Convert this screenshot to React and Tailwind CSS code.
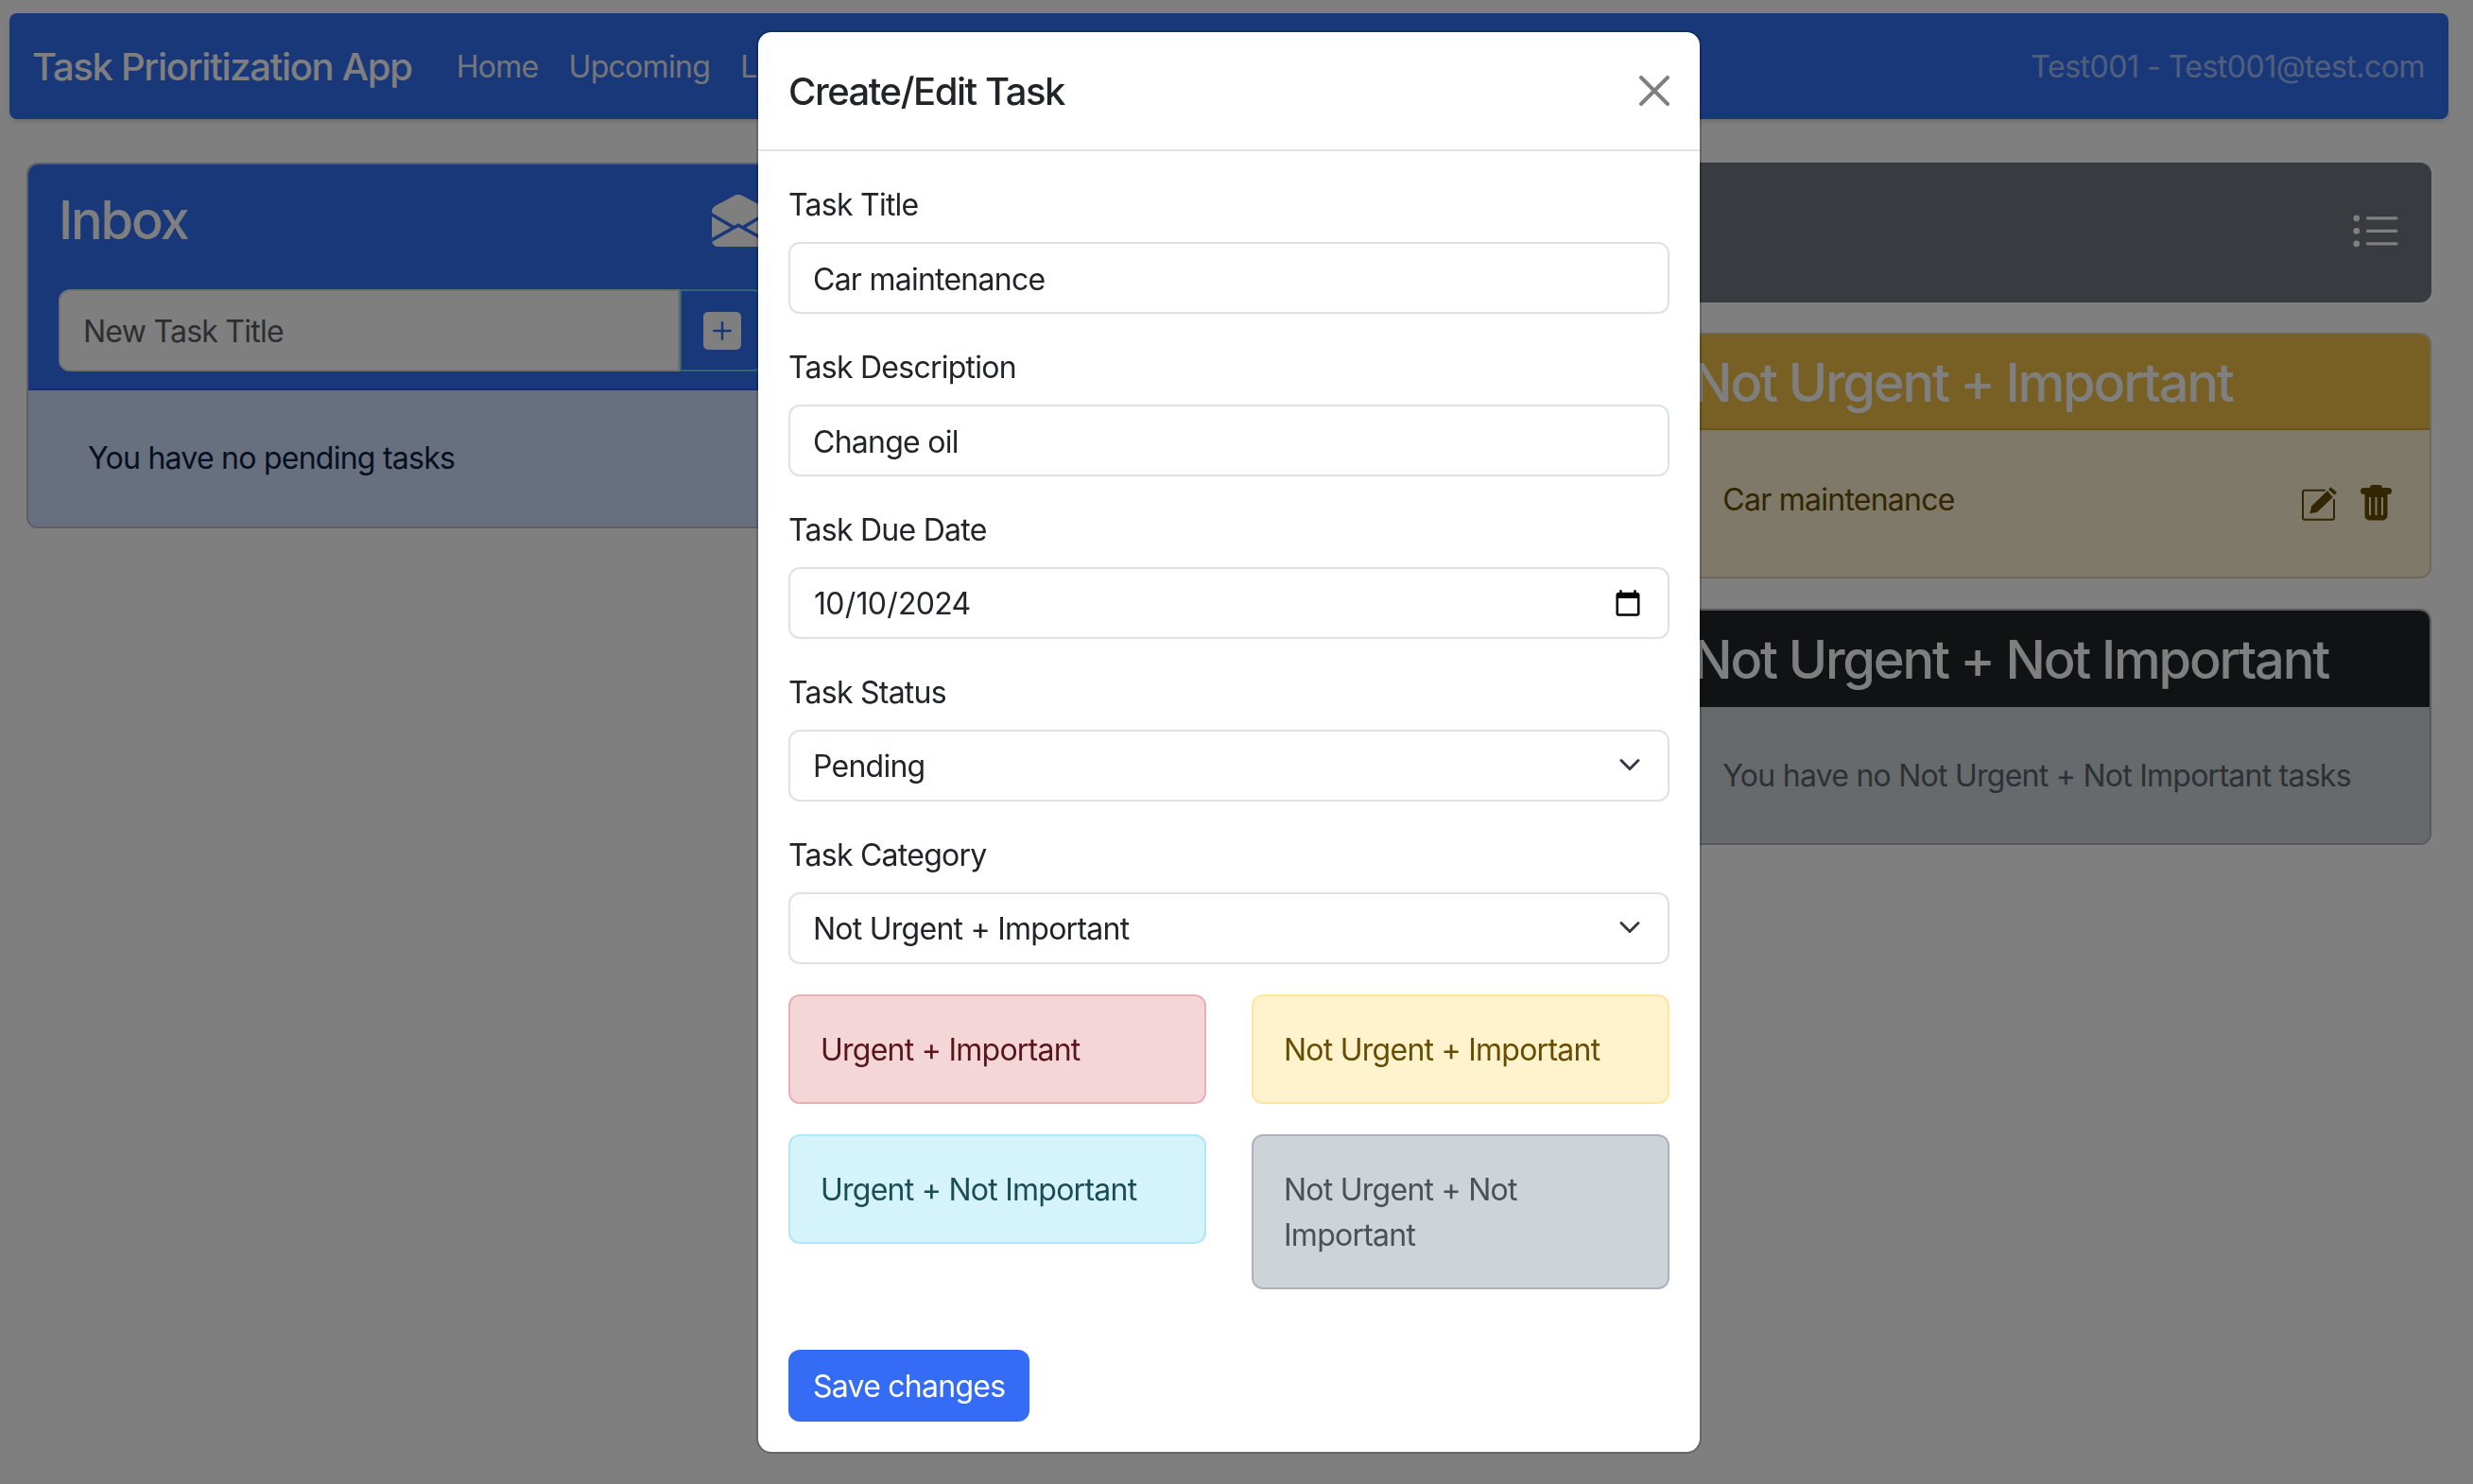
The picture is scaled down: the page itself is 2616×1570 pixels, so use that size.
import { BsEnvelopeOpenFill, BsPlusSquareFill, BsListUl } from 'react-icons/bs'

const font = { fontFamily: 'Inter, "Liberation Sans", sans-serif' }

const inputCls = 'block w-full h-[76px] border-2 border-[#dee2e6] rounded-xl px-[24px] pt-[2px] text-[32px] tracking-[-0.75px] text-[#212529] bg-white appearance-none outline-none'
const labelCls = 'block h-12 leading-[50px] mb-4 text-[32px] tracking-[-0.75px] text-[#212529]'
const titleCls = 'text-[56px] font-medium leading-[67px] whitespace-nowrap tracking-[-2.2px]'

function Field({ label, children }) {
  return (
    <div className="mb-8">
      <label className={labelCls}>{label}</label>
      {children}
    </div>
  )
}

function SelectField({ label, value }) {
  return (
    <Field label={label}>
      <div className="relative">
        <select className={inputCls} defaultValue={value}>
          <option>{value}</option>
        </select>
        <svg className="absolute right-[30px] top-[25px] w-6 h-6 pointer-events-none" viewBox="0 0 16 16" fill="none" stroke="#343a40" strokeWidth="2" strokeLinecap="round" strokeLinejoin="round">
          <path d="m2 5 6 6 6-6" />
        </svg>
      </div>
    </Field>
  )
}

function CategoryBox({ cls, children }) {
  return <div className={`border-2 rounded-xl px-[32px] pt-[33px] pb-[31px] text-[32px] leading-[48px] tracking-[-0.75px] ${cls}`}>{children}</div>
}

function EditIcon() {
  return (
    <svg className="w-[38px] h-[40px] text-[#664d03]" viewBox="0 0 38 40" fill="currentColor">
      <path d="M24 5.7H3a2 2 0 0 0-2 2v27a2 2 0 0 0 2 2h29a2 2 0 0 0 2-2V16" fill="none" stroke="currentColor" strokeWidth="2" strokeLinecap="round" />
      <path d="M8.3 30.3 10.3 22.3 27 6.3 32.7 13 16 29Z" />
      <path d="M30.3 2.3 37 8 34.7 10.7 28.3 5Z" />
    </svg>
  )
}

function TrashIcon() {
  return (
    <svg className="w-[33px] h-[38px] text-[#664d03]" viewBox="0 0 33 38" fill="currentColor">
      <rect x="10" y="0" width="13" height="6" rx="3" />
      <rect x="0" y="3" width="33" height="7" rx="3.5" />
      <path d="M4.5 8h24v24.5a5 5 0 0 1-5 5h-14a5 5 0 0 1-5-5Z" />
      <rect x="9" y="13" width="2" height="19" fill="#fff3d5" />
      <rect x="15.5" y="13" width="2" height="19" fill="#fff3d5" />
      <rect x="22" y="13" width="2" height="19" fill="#fff3d5" />
    </svg>
  )
}

function TaskModal() {
  return (
    <div className="fixed inset-0 bg-black/50 flex items-center justify-center pr-4">
      <div className="w-[1000px] bg-white rounded-2xl border-2 border-black/20 bg-clip-padding">
        <div className="h-[126px] flex items-center justify-between px-[32px] border-b-2 border-[#dee2e6]">
          <h5 className="pt-[2px] text-[40px] font-medium text-[#212529] tracking-[-1.45px]">Create/Edit Task</h5>
          <svg className="w-8 h-8" viewBox="0 0 16 16" fill="none" stroke="#808080" strokeWidth="2" strokeLinecap="round">
            <path d="M1 1l14 14M15 1 1 15" />
          </svg>
        </div>
        <div className="p-[32px]">
          <Field label="Task Title">
            <input className={inputCls} defaultValue="Car maintenance" />
          </Field>
          <Field label="Task Description">
            <input className={inputCls} defaultValue="Change oil" />
          </Field>
          <Field label="Task Due Date">
            <input type="date" className={inputCls} defaultValue="2024-10-10" />
          </Field>
          <SelectField label="Task Status" value="Pending" />
          <SelectField label="Task Category" value="Not Urgent + Important" />
          <div className="grid grid-cols-2 gap-x-12 items-start">
            <CategoryBox cls="mb-8 bg-[#f4d6d9] border-[#ecaeb5] text-[#58151c]">Urgent + Important</CategoryBox>
            <CategoryBox cls="mb-8 bg-[#fff3cd] border-[#ffe69c] text-[#664d03]">Not Urgent + Important</CategoryBox>
            <CategoryBox cls="bg-[#d4f3fb] border-[#aee7f6] text-[#1b4d59]">Urgent + Not Important</CategoryBox>
            <CategoryBox cls="bg-[#ced3d8] border-[#adb3bb] text-[#495057]">Not Urgent + Not Important</CategoryBox>
          </div>
          <button className="mt-16 h-[76px] px-[26px] pt-[2px] rounded-xl bg-[#346cf5] text-white text-[32px] tracking-[-0.75px]">Save changes</button>
        </div>
      </div>
    </div>
  )
}

export default function App() {
  return (
    <div style={font} className="w-[2600px] min-h-[1570px] bg-white pt-[14px]">
      <nav className="mx-[10px] h-[112px] rounded-lg bg-[#3170f5] shadow-md flex items-center justify-between pl-[24px] pr-[25px] pt-[2px]">
        <div className="flex items-center">
          <span className="text-[40px] font-medium text-white tracking-[-1.3px] mr-[47px]">Task Prioritization App</span>
          <div className="flex gap-[32px] text-[32px] tracking-[-0.7px] text-[#e8ecf5]">
            <span>Home</span>
            <span>Upcoming</span>
            <span>Later</span>
          </div>
        </div>
        <span className="text-[32px] tracking-[-0.5px] text-white/55">Test001 - Test001@test.com</span>
      </nav>

      <main className="grid grid-cols-3 gap-[50px] px-[28px] pt-[46px]">
        <section>
          <div className="rounded-xl border-2 border-[#b8bfd0] overflow-hidden">
            <div className="bg-[#3170f5] text-white px-[32px] pt-[16px] pb-[18px] border-b-2 border-[#2b62d8]">
              <div className="h-[86px] flex items-center justify-between mb-[30px]">
                <h3 className={titleCls}>Inbox</h3>
                <BsEnvelopeOpenFill className="w-14 h-14" />
              </div>
              <div className="flex h-[87px]">
                <input className="flex-1 min-w-0 bg-white border-2 border-[#dee2e6] rounded-l-xl px-[24px] pt-[2px] text-[32px] tracking-[-0.75px] text-[#595c5f] placeholder:text-[#595c5f] outline-none" placeholder="New Task Title" />
                <button className="border-2 border-[#5ad0e8] px-[23px] rounded-r-xl">
                  <BsPlusSquareFill className="w-10 h-10 text-white" />
                </button>
              </div>
            </div>
            <div className="bg-[#d0defd] px-[63px] py-12 text-[32px] leading-[48px] tracking-[-0.75px] text-[#0c1f45]">You have no pending tasks</div>
          </div>
        </section>

        <section />

        <section className="flex flex-col gap-[32px]">
          <div className="h-[148px] rounded-xl bg-[#70767f] text-white flex items-center justify-end px-[32px]">
            <BsListUl className="w-[54px] h-[54px]" />
          </div>
          <div className="rounded-xl border-2 border-[#d9d1b8] overflow-hidden">
            <div className={`bg-[#f0c048] text-white px-[31px] pt-[18px] pb-[14px] border-b-2 border-[#d8a93a] ${titleCls}`}>Not Urgent + Important</div>
            <div className="bg-[#fff3d5] pl-[63px] pr-[40px] pt-[50px] flex justify-between text-[32px] leading-[48px] tracking-[-0.75px] text-[#664d03] h-[155px]">
              <span>Car maintenance</span>
              <div className="flex gap-[24px] pt-[8px] items-start">
                <EditIcon />
                <TrashIcon />
              </div>
            </div>
          </div>
          <div className="rounded-xl border-2 border-[#adb5bd] overflow-hidden">
            <div className={`bg-[#212529] text-white px-[31px] pt-[19px] pb-[16px] ${titleCls}`}>Not Urgent + Not Important</div>
            <div className="bg-[#ced4da] px-[63px] pt-[49px] pb-[47px] whitespace-nowrap text-[32px] leading-[48px] tracking-[-0.75px] text-[#5a6268]">You have no Not Urgent + Not Important tasks</div>
          </div>
        </section>
      </main>

      <TaskModal />
    </div>
  )
}
